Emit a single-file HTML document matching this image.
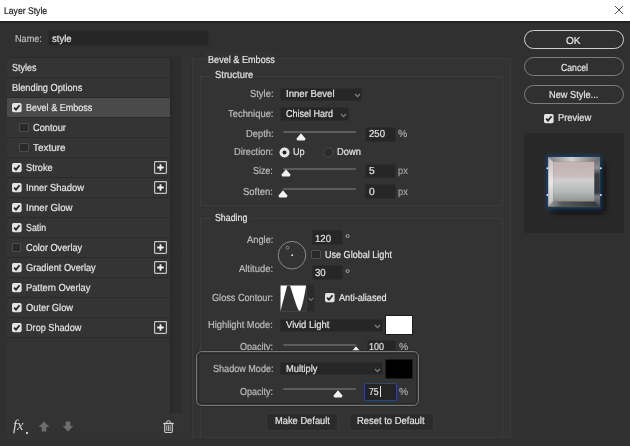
<!DOCTYPE html>
<html><head><meta charset="utf-8"><title>Layer Style</title>
<style>
*{box-sizing:border-box;margin:0;padding:0}
html,body{width:630px;height:446px;overflow:hidden;background:#303030}
body{font-family:"Liberation Sans",sans-serif;font-size:10.5px;color:#e4e4e4;position:relative}
.abs{position:absolute}
.t{position:absolute;white-space:nowrap;line-height:14px;height:14px;-webkit-text-stroke:0.2px currentColor;text-rendering:geometricPrecision}
</style></head><body>
<div class="abs" style="left:0;top:0;width:630px;height:21px;background:#fff"></div>
<div class="abs" style="left:0;top:21px;width:630px;height:1.5px;background:#242424"></div>
<svg class="abs" style="left:614px;top:5px" width="10" height="10" viewBox="0 0 10 10"><path d="M1 1L9 9M9 1L1 9" stroke="#4a4a4a" stroke-width="1" fill="none"/></svg>
<div class="abs" style="left:48px;top:30px;width:160.5px;height:16px;background:#262626;border:1px solid #2c2c2c;border-radius:2px;"></div>
<div class="abs" style="left:7px;top:57px;width:184px;height:382px;background:#333333"></div>
<div class="abs" style="left:170px;top:57px;width:12px;height:356px;background:linear-gradient(90deg,#282828,#2c2c2c 30%,#2d2d2d)"></div>
<div class="abs" style="left:7px;top:58px;width:163px;height:19px;background:#343434"></div>
<div class="abs" style="left:7px;top:77px;width:163px;height:1px;background:#2a2a2a"></div>
<div class="abs" style="left:7px;top:78px;width:163px;height:19px;background:#343434"></div>
<div class="abs" style="left:7px;top:97px;width:163px;height:1px;background:#2a2a2a"></div>
<div class="abs" style="left:7px;top:98px;width:163px;height:19px;background:#4a4a4a"></div>
<div class="abs" style="left:7px;top:117px;width:163px;height:1px;background:#2a2a2a"></div>
<div class="abs" style="left:7px;top:118px;width:163px;height:19px;background:#343434"></div>
<div class="abs" style="left:7px;top:137px;width:163px;height:1px;background:#2a2a2a"></div>
<div class="abs" style="left:7px;top:138px;width:163px;height:19px;background:#343434"></div>
<div class="abs" style="left:7px;top:157px;width:163px;height:1px;background:#2a2a2a"></div>
<div class="abs" style="left:7px;top:158px;width:163px;height:19px;background:#343434"></div>
<div class="abs" style="left:7px;top:177px;width:163px;height:1px;background:#2a2a2a"></div>
<div class="abs" style="left:7px;top:178px;width:163px;height:19px;background:#343434"></div>
<div class="abs" style="left:7px;top:197px;width:163px;height:1px;background:#2a2a2a"></div>
<div class="abs" style="left:7px;top:198px;width:163px;height:19px;background:#343434"></div>
<div class="abs" style="left:7px;top:217px;width:163px;height:1px;background:#2a2a2a"></div>
<div class="abs" style="left:7px;top:218px;width:163px;height:19px;background:#343434"></div>
<div class="abs" style="left:7px;top:237px;width:163px;height:1px;background:#2a2a2a"></div>
<div class="abs" style="left:7px;top:238px;width:163px;height:19px;background:#343434"></div>
<div class="abs" style="left:7px;top:257px;width:163px;height:1px;background:#2a2a2a"></div>
<div class="abs" style="left:7px;top:258px;width:163px;height:19px;background:#343434"></div>
<div class="abs" style="left:7px;top:277px;width:163px;height:1px;background:#2a2a2a"></div>
<div class="abs" style="left:7px;top:278px;width:163px;height:19px;background:#343434"></div>
<div class="abs" style="left:7px;top:297px;width:163px;height:1px;background:#2a2a2a"></div>
<div class="abs" style="left:7px;top:298px;width:163px;height:19px;background:#343434"></div>
<div class="abs" style="left:7px;top:317px;width:163px;height:1px;background:#2a2a2a"></div>
<div class="abs" style="left:7px;top:318px;width:163px;height:19px;background:#343434"></div>
<div class="abs" style="left:7px;top:337px;width:163px;height:1px;background:#2a2a2a"></div>
<div class="abs" style="left:7px;top:57px;width:163px;height:1px;background:#2a2a2a"></div>
<svg class="abs" style="left:11.6px;top:103px" width="10" height="10" viewBox="0 0 10 10"><rect x="0" y="0" width="9.6" height="9.2" rx="1.6" fill="#e2e2e2"/><path d="M2.1 4.6L4 6.6L7.6 2.3" stroke="#262626" stroke-width="1.7" fill="none"/></svg>
<div class="abs" style="left:19px;top:123.2px;width:9.6px;height:9.2px;border:1px solid #4d4d4d;background:#2a2a2a;border-radius:1px"></div>
<div class="abs" style="left:19px;top:143.2px;width:9.6px;height:9.2px;border:1px solid #4d4d4d;background:#2a2a2a;border-radius:1px"></div>
<svg class="abs" style="left:11.6px;top:163px" width="10" height="10" viewBox="0 0 10 10"><rect x="0" y="0" width="9.6" height="9.2" rx="1.6" fill="#e2e2e2"/><path d="M2.1 4.6L4 6.6L7.6 2.3" stroke="#262626" stroke-width="1.7" fill="none"/></svg>
<svg class="abs" style="left:11.6px;top:183px" width="10" height="10" viewBox="0 0 10 10"><rect x="0" y="0" width="9.6" height="9.2" rx="1.6" fill="#e2e2e2"/><path d="M2.1 4.6L4 6.6L7.6 2.3" stroke="#262626" stroke-width="1.7" fill="none"/></svg>
<svg class="abs" style="left:11.6px;top:203px" width="10" height="10" viewBox="0 0 10 10"><rect x="0" y="0" width="9.6" height="9.2" rx="1.6" fill="#e2e2e2"/><path d="M2.1 4.6L4 6.6L7.6 2.3" stroke="#262626" stroke-width="1.7" fill="none"/></svg>
<svg class="abs" style="left:11.6px;top:223px" width="10" height="10" viewBox="0 0 10 10"><rect x="0" y="0" width="9.6" height="9.2" rx="1.6" fill="#e2e2e2"/><path d="M2.1 4.6L4 6.6L7.6 2.3" stroke="#262626" stroke-width="1.7" fill="none"/></svg>
<svg class="abs" style="left:11.6px;top:263px" width="10" height="10" viewBox="0 0 10 10"><rect x="0" y="0" width="9.6" height="9.2" rx="1.6" fill="#e2e2e2"/><path d="M2.1 4.6L4 6.6L7.6 2.3" stroke="#262626" stroke-width="1.7" fill="none"/></svg>
<svg class="abs" style="left:11.6px;top:283px" width="10" height="10" viewBox="0 0 10 10"><rect x="0" y="0" width="9.6" height="9.2" rx="1.6" fill="#e2e2e2"/><path d="M2.1 4.6L4 6.6L7.6 2.3" stroke="#262626" stroke-width="1.7" fill="none"/></svg>
<svg class="abs" style="left:11.6px;top:303px" width="10" height="10" viewBox="0 0 10 10"><rect x="0" y="0" width="9.6" height="9.2" rx="1.6" fill="#e2e2e2"/><path d="M2.1 4.6L4 6.6L7.6 2.3" stroke="#262626" stroke-width="1.7" fill="none"/></svg>
<svg class="abs" style="left:11.6px;top:323px" width="10" height="10" viewBox="0 0 10 10"><rect x="0" y="0" width="9.6" height="9.2" rx="1.6" fill="#e2e2e2"/><path d="M2.1 4.6L4 6.6L7.6 2.3" stroke="#262626" stroke-width="1.7" fill="none"/></svg>
<div class="abs" style="left:11.6px;top:243px;width:9.6px;height:9.2px;border:1px solid #4d4d4d;background:#2a2a2a;border-radius:1px"></div>
<svg class="abs" style="left:154px;top:161px" width="13" height="13" viewBox="0 0 13 13"><rect x="0.6" y="0.6" width="11.8" height="11.8" rx="0.8" fill="#2f2f2f" stroke="#c6c6c6" stroke-width="1.2"/><path d="M3.2 6.5H9.8M6.5 3.2V9.8" stroke="#f0f0f0" stroke-width="1.8" fill="none"/></svg>
<svg class="abs" style="left:154px;top:181px" width="13" height="13" viewBox="0 0 13 13"><rect x="0.6" y="0.6" width="11.8" height="11.8" rx="0.8" fill="#2f2f2f" stroke="#c6c6c6" stroke-width="1.2"/><path d="M3.2 6.5H9.8M6.5 3.2V9.8" stroke="#f0f0f0" stroke-width="1.8" fill="none"/></svg>
<svg class="abs" style="left:154px;top:241px" width="13" height="13" viewBox="0 0 13 13"><rect x="0.6" y="0.6" width="11.8" height="11.8" rx="0.8" fill="#2f2f2f" stroke="#c6c6c6" stroke-width="1.2"/><path d="M3.2 6.5H9.8M6.5 3.2V9.8" stroke="#f0f0f0" stroke-width="1.8" fill="none"/></svg>
<svg class="abs" style="left:154px;top:261px" width="13" height="13" viewBox="0 0 13 13"><rect x="0.6" y="0.6" width="11.8" height="11.8" rx="0.8" fill="#2f2f2f" stroke="#c6c6c6" stroke-width="1.2"/><path d="M3.2 6.5H9.8M6.5 3.2V9.8" stroke="#f0f0f0" stroke-width="1.8" fill="none"/></svg>
<svg class="abs" style="left:154px;top:321px" width="13" height="13" viewBox="0 0 13 13"><rect x="0.6" y="0.6" width="11.8" height="11.8" rx="0.8" fill="#2f2f2f" stroke="#c6c6c6" stroke-width="1.2"/><path d="M3.2 6.5H9.8M6.5 3.2V9.8" stroke="#f0f0f0" stroke-width="1.8" fill="none"/></svg>
<div class="t" style="left:13.2px;top:417.5px;font-size:15px;font-style:italic;color:#d8d8d8;transform:scaleX(0.98);transform-origin:0 0;font-family:'Liberation Serif',serif;line-height:16px;height:16px;-webkit-text-stroke:0">fx</div>
<div class="abs" style="left:26.3px;top:432.3px;width:1.6px;height:1.4px;background:#c8c8c8"></div>
<svg class="abs" style="left:38px;top:421px" width="12" height="11" viewBox="0 0 12 11"><path d="M6 0.5L11.3 6H8.3V10.5H3.7V6H0.7Z" fill="#6e6e6e"/></svg>
<svg class="abs" style="left:62px;top:421px" width="12" height="11" viewBox="0 0 12 11"><path d="M6 10.5L11.3 5H8.3V0.5H3.7V5H0.7Z" fill="#6e6e6e"/></svg>
<svg class="abs" style="left:163px;top:420px" width="11" height="14" viewBox="0 0 11 14"><path d="M3.7 3V2.1Q3.7 0.7 5.5 0.7Q7.3 0.7 7.3 2.1V3" stroke="#cfcfcf" stroke-width="1" fill="none"/><path d="M0.3 3.5H10.7" stroke="#dadada" stroke-width="1.3" fill="none"/><path d="M1.7 4V11.6Q1.7 12.5 2.6 12.5H8.4Q9.3 12.5 9.3 11.6V4" stroke="#cfcfcf" stroke-width="1.1" fill="none"/><path d="M3.8 5.2V11M5.5 5.2V11M7.2 5.2V11" stroke="#c4c4c4" stroke-width="0.9" fill="none"/></svg>
<div class="abs" style="left:191.5px;top:57.5px;width:319px;height:380px;background:#333333;border:1px solid #3a3a3a"></div>
<div class="abs" style="left:199.5px;top:76px;width:303px;height:129.5px;border:1px solid #3b3b3b"></div>
<div class="abs" style="left:199.5px;top:217.5px;width:303px;height:220px;border:1px solid #3b3b3b;border-bottom:none"></div>
<div class="abs" style="left:205px;top:52px;width:73px;height:14px;background:#333333"></div>
<div class="abs" style="left:212px;top:70px;width:44px;height:12px;background:#333333"></div>
<div class="abs" style="left:212px;top:212px;width:38px;height:12px;background:#333333"></div>
<div class="abs" style="left:280px;top:87.6px;width:82px;height:13.800000000000011px;background:#262626;border:1px solid #2c2c2c;border-radius:2px;"></div>
<svg class="abs" style="left:353.6px;top:93px" width="7" height="4.6" viewBox="0 0 7 4.6"><path d="M1 1L3.5 3.6L6 1" stroke="#858585" stroke-width="1.1" fill="none"/></svg>
<div class="abs" style="left:280px;top:107.3px;width:68.5px;height:13.299999999999997px;background:#262626;border:1px solid #2c2c2c;border-radius:2px;"></div>
<svg class="abs" style="left:340px;top:113px" width="7" height="4.6" viewBox="0 0 7 4.6"><path d="M1 1L3.5 3.6L6 1" stroke="#858585" stroke-width="1.1" fill="none"/></svg>
<div class="abs" style="left:283px;top:131px;width:73px;height:2px;background:#5c5c5c;border-radius:1px"></div>
<svg class="abs" style="left:295.8px;top:133px" width="10" height="8" viewBox="0 0 10 8"><path d="M5 0.2L9.2 5.2V6.4Q9.2 7.4 8.2 7.4H1.8Q0.8 7.4 0.8 6.4V5.2Z" fill="#f2f2f2"/></svg>
<div class="abs" style="left:283px;top:168px;width:73px;height:2px;background:#5c5c5c;border-radius:1px"></div>
<svg class="abs" style="left:281px;top:169.3px" width="10" height="8" viewBox="0 0 10 8"><path d="M5 0.2L9.2 5.2V6.4Q9.2 7.4 8.2 7.4H1.8Q0.8 7.4 0.8 6.4V5.2Z" fill="#f2f2f2"/></svg>
<div class="abs" style="left:283px;top:187.5px;width:73px;height:2px;background:#5c5c5c;border-radius:1px"></div>
<svg class="abs" style="left:277.5px;top:189.5px" width="10" height="8" viewBox="0 0 10 8"><path d="M5 0.2L9.2 5.2V6.4Q9.2 7.4 8.2 7.4H1.8Q0.8 7.4 0.8 6.4V5.2Z" fill="#f2f2f2"/></svg>
<div class="abs" style="left:365px;top:127px;width:30.69999999999999px;height:15px;background:#262626;border:1px solid #2c2c2c;border-radius:2px;"></div>
<div class="abs" style="left:365px;top:163.5px;width:30.69999999999999px;height:14.800000000000011px;background:#262626;border:1px solid #2c2c2c;border-radius:2px;"></div>
<div class="abs" style="left:365px;top:184px;width:30.69999999999999px;height:15px;background:#262626;border:1px solid #2c2c2c;border-radius:2px;"></div>
<svg class="abs" style="left:278.5px;top:146.5px" width="11" height="11" viewBox="0 0 11 11"><circle cx="5.5" cy="5.5" r="5" fill="#e6e6e6"/><circle cx="5.5" cy="5.5" r="2" fill="#222"/></svg>
<svg class="abs" style="left:323px;top:146.5px" width="11" height="11" viewBox="0 0 11 11"><circle cx="5.5" cy="5.5" r="4.6" fill="#2b2b2b" stroke="#4c4c4c" stroke-width="1"/></svg>
<svg class="abs" style="left:277px;top:240px" width="30" height="30" viewBox="0 0 30 30"><circle cx="15" cy="15.2" r="13.8" fill="none" stroke="#8a8a8a" stroke-width="1"/><circle cx="15.2" cy="15.2" r="0.9" fill="#eee"/><circle cx="10.6" cy="7.6" r="1.4" fill="none" stroke="#9a9a9a" stroke-width="0.8"/></svg>
<div class="abs" style="left:311.5px;top:230px;width:31.5px;height:15px;background:#262626;border:1px solid #2c2c2c;border-radius:2px;"></div>
<div class="abs" style="left:311.5px;top:264.5px;width:31.5px;height:15.300000000000011px;background:#262626;border:1px solid #2c2c2c;border-radius:2px;"></div>
<div class="abs" style="left:311px;top:250px;width:9.6px;height:9.2px;border:1px solid #4d4d4d;background:#2a2a2a;border-radius:1px"></div>
<svg class="abs" style="left:279.5px;top:285px" width="35" height="27" viewBox="0 0 35 27"><rect x="0" y="0" width="34.5" height="26.5" fill="#2a2a2a"/><rect x="0.5" y="0.5" width="25.6" height="25.6" fill="#fff"/><path d="M0.5 26.1L7.2 0.5L10 0.5C12.6 8 15.8 20 18.6 25.2Q19.6 26.6 20.6 25C22.8 20 24.8 9 26.1 0.5V26.1Z" fill="#333"/><path d="M28.7 13L31 15.5L33.3 13" stroke="#808080" stroke-width="1.1" fill="none"/></svg>
<svg class="abs" style="left:325.2px;top:293.4px" width="10" height="10" viewBox="0 0 10 10"><rect x="0" y="0" width="9.6" height="9.2" rx="1.6" fill="#e2e2e2"/><path d="M2.1 4.6L4 6.6L7.6 2.3" stroke="#262626" stroke-width="1.7" fill="none"/></svg>
<div class="abs" style="left:280px;top:319.2px;width:103.39999999999998px;height:12.800000000000011px;background:#262626;border:1px solid #2c2c2c;border-radius:2px;"></div>
<svg class="abs" style="left:373.6px;top:324px" width="7" height="4.6" viewBox="0 0 7 4.6"><path d="M1 1L3.5 3.6L6 1" stroke="#858585" stroke-width="1.1" fill="none"/></svg>
<div class="abs" style="left:385px;top:315.3px;width:28.2px;height:20.2px;background:#fff;border:1px solid #1c1c1c"></div>
<div class="abs" style="left:283px;top:344px;width:73px;height:2px;background:#5c5c5c;border-radius:1px"></div>
<svg class="abs" style="left:351px;top:345.6px" width="10" height="8" viewBox="0 0 10 8"><path d="M5 0.2L9.2 5.2V6.4Q9.2 7.4 8.2 7.4H1.8Q0.8 7.4 0.8 6.4V5.2Z" fill="#f2f2f2"/></svg>
<div class="abs" style="left:366.5px;top:339.5px;width:29.5px;height:15.5px;background:#262626;border:1px solid #2c2c2c;border-radius:2px;"></div>
<div class="abs" style="left:195.8px;top:350.8px;width:223px;height:55.4px;border:1.5px solid #787878;border-radius:5.5px;background:#333333;box-shadow:0 0 0 0.8px #2a2a2a, inset 0 0 0 0.7px #3c3c3c, inset 0 0 0 2px #282828;z-index:2"></div>
<div class="abs" style="z-index:3;left:280px;top:362.4px;width:103.39999999999998px;height:13.0px;background:#262626;border:1px solid #2c2c2c;border-radius:2px;"></div>
<svg class="abs" style="z-index:3;left:373.6px;top:367.6px" width="7" height="4.6" viewBox="0 0 7 4.6"><path d="M1 1L3.5 3.6L6 1" stroke="#858585" stroke-width="1.1" fill="none"/></svg>
<div class="abs" style="z-index:3;left:385px;top:359px;width:28.2px;height:20.3px;background:#000;border:1px solid #1c1c1c"></div>
<div class="abs" style="z-index:3;left:283px;top:388px;width:73px;height:2px;background:#5c5c5c;border-radius:1px"></div>
<svg class="abs" style="z-index:3;left:333px;top:390px" width="10" height="8" viewBox="0 0 10 8"><path d="M5 0.2L9.2 5.2V6.4Q9.2 7.4 8.2 7.4H1.8Q0.8 7.4 0.8 6.4V5.2Z" fill="#f2f2f2"/></svg>
<div class="abs" style="z-index:3;left:364px;top:382.5px;width:33px;height:18.0px;background:#262626;border:1px solid #2c2c2c;border-radius:2px;border:1.4px solid #28487c;background:#242424"></div>
<div class="abs" style="z-index:3;left:379.6px;top:386px;width:1px;height:11px;background:#e8e8e8"></div>
<div class="abs" style="left:266px;top:412.5px;width:72px;height:18.5px;background:#2b2b2b;border:1px solid #393939;border-radius:3px"></div>
<div class="abs" style="left:349px;top:412.5px;width:84.5px;height:18.5px;background:#2b2b2b;border:1px solid #393939;border-radius:3px"></div>
<div class="abs" style="left:524px;top:30px;width:100px;height:19px;border:1px solid #cfcfcf;border-radius:10px"></div>
<div class="abs" style="left:524px;top:57px;width:100px;height:19px;border:1px solid #7d7d7d;border-radius:10px"></div>
<div class="abs" style="left:524px;top:84.5px;width:100px;height:19px;border:1px solid #7d7d7d;border-radius:10px"></div>
<svg class="abs" style="left:544.2px;top:113.6px" width="10" height="10" viewBox="0 0 10 10"><rect x="0" y="0" width="9.6" height="9.2" rx="1.6" fill="#e2e2e2"/><path d="M2.1 4.6L4 6.6L7.6 2.3" stroke="#262626" stroke-width="1.7" fill="none"/></svg>
<div class="abs" style="left:523.5px;top:132.5px;width:100.5px;height:100px;background:#282828"></div>
<svg class="abs" style="left:530px;top:140px" width="90" height="90" viewBox="530 140 90 90">
<defs>
<filter id="bl" x="-30%" y="-30%" width="160%" height="160%"><feGaussianBlur stdDeviation="2.6"/></filter>
<filter id="bl2" x="-30%" y="-30%" width="160%" height="160%"><feGaussianBlur stdDeviation="1.5"/></filter>
<filter id="bl3" x="-30%" y="-30%" width="160%" height="160%"><feGaussianBlur stdDeviation="0.5"/></filter>
<filter id="nz" x="0" y="0" width="100%" height="100%"><feTurbulence type="fractalNoise" baseFrequency="0.55" numOctaves="3" seed="7" result="n"/><feColorMatrix in="n" type="matrix" values="0 0 0 0 0.5  0 0 0 0 0.5  0 0 0 0 0.5  1.6 0 0 0 -0.55"/><feComposite in2="SourceGraphic" operator="in"/></filter>
<linearGradient id="face" x1="0" y1="0" x2="0" y2="1"><stop offset="0" stop-color="#c3b0b0"/><stop offset="0.36" stop-color="#cbbcbc"/><stop offset="0.46" stop-color="#d2d3d3"/><stop offset="0.75" stop-color="#b6b9b9"/><stop offset="1" stop-color="#8e9090"/></linearGradient>
<linearGradient id="topb" x1="0" y1="0" x2="1" y2="0"><stop offset="0" stop-color="#7e7a7a"/><stop offset="0.45" stop-color="#d8cece"/><stop offset="0.7" stop-color="#a39c9c"/><stop offset="1" stop-color="#6f6d6d"/></linearGradient>
<linearGradient id="leftb" x1="0" y1="0" x2="0" y2="1"><stop offset="0" stop-color="#c4bdbd"/><stop offset="0.5" stop-color="#ece8e8"/><stop offset="1" stop-color="#bdbdbd"/></linearGradient>
<linearGradient id="rightb" x1="0" y1="0" x2="0" y2="1"><stop offset="0" stop-color="#66676b"/><stop offset="0.22" stop-color="#8a8d92"/><stop offset="0.35" stop-color="#3a3e44"/><stop offset="0.72" stop-color="#34383e"/><stop offset="0.8" stop-color="#7c8086"/><stop offset="1" stop-color="#3e4146"/></linearGradient>
<linearGradient id="botb" x1="0" y1="0" x2="1" y2="0"><stop offset="0" stop-color="#a0a0a0"/><stop offset="0.25" stop-color="#5a5a5c"/><stop offset="1" stop-color="#343436"/></linearGradient>
</defs>
<rect x="553" y="163" width="52" height="50" fill="#0a0a0a" opacity="0.9" filter="url(#bl)"/>
<rect x="545.6" y="154.4" width="56.2" height="55" rx="2.5" fill="#1b3b5e" filter="url(#bl2)"/>
<g filter="url(#bl3)">
<rect x="548.3" y="157" width="51.5" height="49.5" fill="#777"/>
<path d="M548.3 157H599.8L594.2 161.8H553.2Z" fill="url(#topb)"/>
<path d="M548.3 157L553.2 161.8V201.3L548.3 206.5Z" fill="url(#leftb)"/>
<path d="M599.8 157V206.5L594.2 201.3V161.8Z" fill="url(#rightb)"/>
<path d="M548.3 206.5L553.2 201.3H594.2L599.8 206.5Z" fill="url(#botb)"/>
<rect x="553.2" y="161.8" width="41" height="39.5" fill="url(#face)"/>
</g>
<rect x="553.2" y="161.8" width="41" height="39.5" fill="#555" opacity="0.35" filter="url(#nz)"/>
<circle cx="547.4" cy="168.3" r="1" fill="#dfe8f8"/><circle cx="547.4" cy="195" r="1" fill="#dfe8f8"/>
<circle cx="600.8" cy="168.3" r="1" fill="#dfe8f8"/><circle cx="600.8" cy="195" r="1" fill="#dfe8f8"/>
</svg>
<div class="t" style="left:3.6px;top:4.5px;color:#1a1a1a;font-size:9.6px;transform:scaleX(0.898);transform-origin:0 0;">Layer Style</div>
<div class="t" style="left:15.3px;top:32.5px;color:#bdbdbd;font-size:10.2px;transform:scaleX(0.896);transform-origin:0 0;">Name:</div>
<div class="t" style="left:51.6px;top:32.5px;color:#e4e4e4;font-size:10.2px;transform:scaleX(0.935);transform-origin:0 0;">style</div>
<div class="t" style="left:11.8px;top:61.5px;color:#e4e4e4;font-size:10.2px;transform:scaleX(0.879);transform-origin:0 0;">Styles</div>
<div class="t" style="left:11.8px;top:81.5px;color:#e4e4e4;font-size:10.2px;transform:scaleX(0.907);transform-origin:0 0;">Blending Options</div>
<div class="t" style="left:25.8px;top:101.5px;color:#e4e4e4;font-size:10.2px;transform:scaleX(0.888);transform-origin:0 0;">Bevel &amp; Emboss</div>
<div class="t" style="left:33.2px;top:121.5px;color:#e4e4e4;font-size:10.2px;transform:scaleX(0.908);transform-origin:0 0;">Contour</div>
<div class="t" style="left:33.2px;top:141.5px;color:#e4e4e4;font-size:10.2px;transform:scaleX(0.972);transform-origin:0 0;">Texture</div>
<div class="t" style="left:25.8px;top:161.5px;color:#e4e4e4;font-size:10.2px;transform:scaleX(0.907);transform-origin:0 0;">Stroke</div>
<div class="t" style="left:25.8px;top:181.5px;color:#e4e4e4;font-size:10.2px;transform:scaleX(0.924);transform-origin:0 0;">Inner Shadow</div>
<div class="t" style="left:25.8px;top:201.5px;color:#e4e4e4;font-size:10.2px;transform:scaleX(0.942);transform-origin:0 0;">Inner Glow</div>
<div class="t" style="left:25.8px;top:221.5px;color:#e4e4e4;font-size:10.2px;transform:scaleX(0.865);transform-origin:0 0;">Satin</div>
<div class="t" style="left:25.8px;top:241.5px;color:#e4e4e4;font-size:10.2px;transform:scaleX(0.901);transform-origin:0 0;">Color Overlay</div>
<div class="t" style="left:25.8px;top:261.5px;color:#e4e4e4;font-size:10.2px;transform:scaleX(0.905);transform-origin:0 0;">Gradient Overlay</div>
<div class="t" style="left:25.8px;top:281.5px;color:#e4e4e4;font-size:10.2px;transform:scaleX(0.910);transform-origin:0 0;">Pattern Overlay</div>
<div class="t" style="left:25.8px;top:301.5px;color:#e4e4e4;font-size:10.2px;transform:scaleX(0.914);transform-origin:0 0;">Outer Glow</div>
<div class="t" style="left:25.8px;top:321.5px;color:#e4e4e4;font-size:10.2px;transform:scaleX(0.897);transform-origin:0 0;">Drop Shadow</div>
<div class="t" style="left:207.6px;top:53.5px;color:#e4e4e4;font-size:10.2px;transform:scaleX(0.894);transform-origin:0 0;">Bevel &amp; Emboss</div>
<div class="t" style="left:214.8px;top:68.5px;color:#e4e4e4;font-size:10.2px;transform:scaleX(0.926);transform-origin:0 0;">Structure</div>
<div class="t" style="left:249.6px;top:87.5px;color:#bdbdbd;font-size:10.2px;transform:scaleX(0.922);transform-origin:0 0;">Style:</div>
<div class="t" style="left:227.6px;top:107.5px;color:#bdbdbd;font-size:10.2px;transform:scaleX(0.923);transform-origin:0 0;">Technique:</div>
<div class="t" style="left:245.5px;top:127.5px;color:#bdbdbd;font-size:10.2px;transform:scaleX(0.920);transform-origin:0 0;">Depth:</div>
<div class="t" style="left:234.0px;top:145.5px;color:#bdbdbd;font-size:10.2px;transform:scaleX(0.909);transform-origin:0 0;">Direction:</div>
<div class="t" style="left:253.4px;top:164.5px;color:#bdbdbd;font-size:10.2px;transform:scaleX(0.870);transform-origin:0 0;">Size:</div>
<div class="t" style="left:243.1px;top:185.5px;color:#bdbdbd;font-size:10.2px;transform:scaleX(0.929);transform-origin:0 0;">Soften:</div>
<div class="t" style="left:285.9px;top:87.5px;color:#e4e4e4;font-size:10.2px;transform:scaleX(0.943);transform-origin:0 0;">Inner Bevel</div>
<div class="t" style="left:285.5px;top:107.5px;color:#e4e4e4;font-size:10.2px;transform:scaleX(0.885);transform-origin:0 0;">Chisel Hard</div>
<div class="t" style="left:368.5px;top:127.5px;color:#e4e4e4;font-size:10.2px;transform:scaleX(0.941);transform-origin:0 0;">250</div>
<div class="t" style="left:398.2px;top:127.5px;color:#a4a4a4;font-size:10.2px;transform:scaleX(1.026);transform-origin:0 0;">%</div>
<div class="t" style="left:292.8px;top:145.5px;color:#e4e4e4;font-size:10.2px;transform:scaleX(0.898);transform-origin:0 0;">Up</div>
<div class="t" style="left:337.4px;top:145.5px;color:#e4e4e4;font-size:10.2px;transform:scaleX(0.914);transform-origin:0 0;">Down</div>
<div class="t" style="left:368.5px;top:164.5px;color:#e4e4e4;font-size:10.2px;transform:scaleX(1.005);transform-origin:0 0;">5</div>
<div class="t" style="left:398.2px;top:164.5px;color:#a4a4a4;font-size:10.2px;transform:scaleX(0.910);transform-origin:0 0;">px</div>
<div class="t" style="left:368.5px;top:185.5px;color:#e4e4e4;font-size:10.2px;transform:scaleX(1.005);transform-origin:0 0;">0</div>
<div class="t" style="left:398.2px;top:185.5px;color:#a4a4a4;font-size:10.2px;transform:scaleX(0.910);transform-origin:0 0;">px</div>
<div class="t" style="left:214.7px;top:211.5px;color:#e4e4e4;font-size:10.2px;transform:scaleX(0.864);transform-origin:0 0;">Shading</div>
<div class="t" style="left:246.7px;top:233.5px;color:#bdbdbd;font-size:10.2px;transform:scaleX(0.914);transform-origin:0 0;">Angle:</div>
<div class="t" style="left:239.1px;top:262.5px;color:#bdbdbd;font-size:10.2px;transform:scaleX(0.924);transform-origin:0 0;">Altitude:</div>
<div class="t" style="left:315.2px;top:232.5px;color:#e4e4e4;font-size:10.2px;transform:scaleX(0.941);transform-origin:0 0;">120</div>
<div class="t" style="left:345.0px;top:231.5px;color:#a4a4a4;font-size:12.5px;transform:scaleX(1.060);transform-origin:0 0;">°</div>
<div class="t" style="left:315.0px;top:266.5px;color:#e4e4e4;font-size:10.2px;transform:scaleX(0.943);transform-origin:0 0;">30</div>
<div class="t" style="left:345.0px;top:266.5px;color:#a4a4a4;font-size:12.5px;transform:scaleX(1.060);transform-origin:0 0;">°</div>
<div class="t" style="left:325.3px;top:248.5px;color:#e4e4e4;font-size:10.2px;transform:scaleX(0.889);transform-origin:0 0;">Use Global Light</div>
<div class="t" style="left:212.1px;top:291.5px;color:#bdbdbd;font-size:10.2px;transform:scaleX(0.898);transform-origin:0 0;">Gloss Contour:</div>
<div class="t" style="left:339.4px;top:291.5px;color:#e4e4e4;font-size:10.2px;transform:scaleX(0.894);transform-origin:0 0;">Anti-aliased</div>
<div class="t" style="left:208.3px;top:318.5px;color:#bdbdbd;font-size:10.2px;transform:scaleX(0.915);transform-origin:0 0;">Highlight Mode:</div>
<div class="t" style="left:285.5px;top:318.5px;color:#e4e4e4;font-size:10.2px;transform:scaleX(0.927);transform-origin:0 0;">Vivid Light</div>
<div class="t" style="left:240.1px;top:340.5px;color:#bdbdbd;font-size:10.2px;transform:scaleX(0.883);transform-origin:0 0;">Opacity:</div>
<div class="t" style="left:369.3px;top:340.5px;color:#e4e4e4;font-size:10.2px;transform:scaleX(0.876);transform-origin:0 0;">100</div>
<div class="t" style="left:398.6px;top:340.5px;color:#a4a4a4;font-size:10.2px;transform:scaleX(1.015);transform-origin:0 0;">%</div>
<div class="t" style="left:212.6px;top:362.5px;color:#bdbdbd;font-size:10.2px;transform:scaleX(0.890);transform-origin:0 0;z-index:3">Shadow Mode:</div>
<div class="t" style="left:285.5px;top:362.5px;color:#e4e4e4;font-size:10.2px;transform:scaleX(0.912);transform-origin:0 0;z-index:3">Multiply</div>
<div class="t" style="left:240.1px;top:385.5px;color:#bdbdbd;font-size:10.2px;transform:scaleX(0.883);transform-origin:0 0;z-index:3">Opacity:</div>
<div class="t" style="left:369.0px;top:385.5px;color:#e4e4e4;font-size:10.2px;transform:scaleX(0.846);transform-origin:0 0;z-index:3">75</div>
<div class="t" style="left:398.6px;top:385.5px;color:#a4a4a4;font-size:10.2px;transform:scaleX(1.015);transform-origin:0 0;z-index:3">%</div>
<div class="t" style="left:275.3px;top:414.5px;color:#e4e4e4;font-size:10.2px;transform:scaleX(0.915);transform-origin:0 0;">Make Default</div>
<div class="t" style="left:357.4px;top:414.5px;color:#e4e4e4;font-size:10.2px;transform:scaleX(0.925);transform-origin:0 0;">Reset to Default</div>
<div class="t" style="left:566.1px;top:34.5px;color:#e4e4e4;font-size:10.2px;transform:scaleX(0.991);transform-origin:0 0;">OK</div>
<div class="t" style="left:560.5px;top:61.5px;color:#e4e4e4;font-size:10.2px;transform:scaleX(0.851);transform-origin:0 0;">Cancel</div>
<div class="t" style="left:549.1px;top:88.5px;color:#e4e4e4;font-size:10.2px;transform:scaleX(0.907);transform-origin:0 0;">New Style...</div>
<div class="t" style="left:558.4px;top:111.5px;color:#e4e4e4;font-size:10.2px;transform:scaleX(0.916);transform-origin:0 0;">Preview</div>
</body></html>
